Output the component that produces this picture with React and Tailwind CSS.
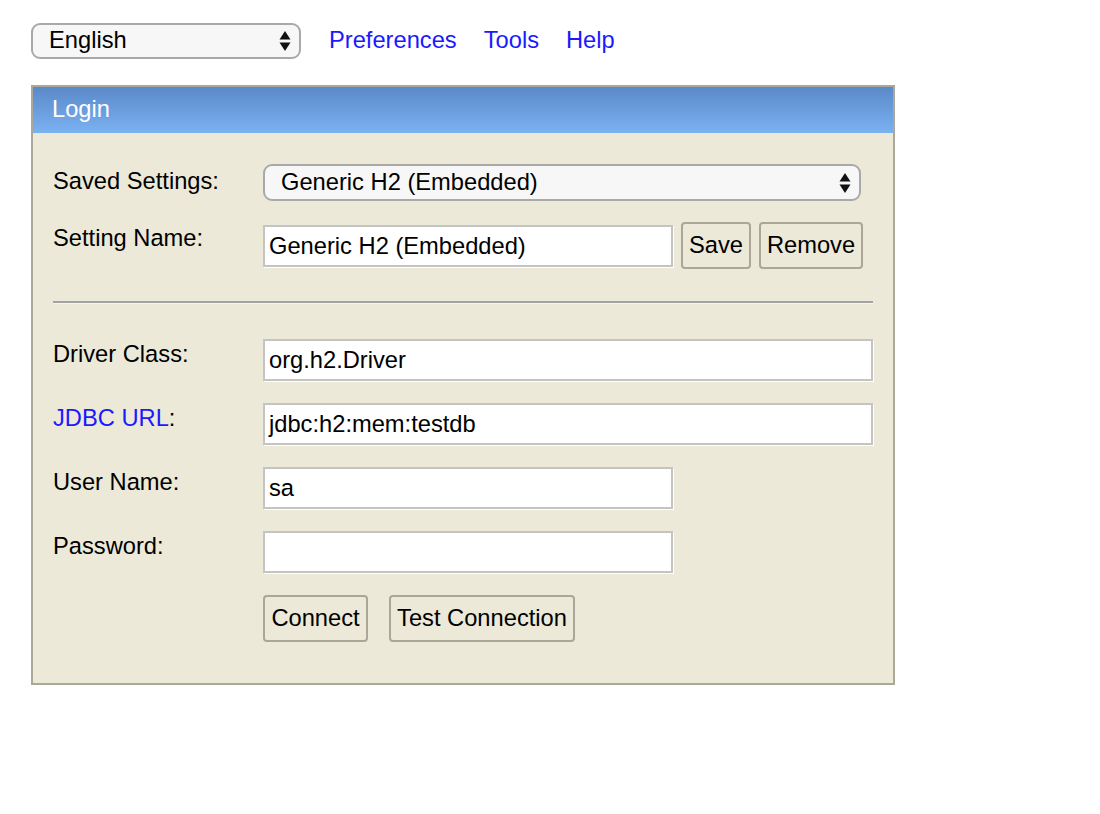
import React from "react";

function Arrows() {
    return (
        <svg width="12" height="22" viewBox="0 0 12 22" className="shrink-0">
            <path d="M6 1 L11.5 9.5 L0.5 9.5 Z" fill="#111" />
            <path d="M0.5 12.5 L11.5 12.5 L6 21 Z" fill="#111" />
        </svg>
    );
}

function FakeSelect({ value, className }) {
    return (
        <div
            className={`flex items-center justify-between rounded-[9px] border-2 border-[#a9a9a9] bg-[#f7f7f7] pl-[16px] pr-[8px] ${className}`}
        >
            <span className="leading-none">{value}</span>
            <Arrows />
        </div>
    );
}

function TextBox({ value, className }) {
    return (
        <div
            className={`h-[42px] flex items-center border-2 border-[#c4c4c4] bg-white pl-[4px] pt-[2px] shadow-[1px_1px_0_#ffffff] ${className}`}
        >
            <span className="leading-none">{value}</span>
        </div>
    );
}

function Btn({ children, className }) {
    return (
        <button
            className={`h-[47px] whitespace-nowrap rounded-[4px] border-2 border-[#aba797] bg-[#ece9d8] px-[4px] leading-none text-black ${className}`}
        >
            {children}
        </button>
    );
}

function Row({ label, children, pt = "pt-[1px]" }) {
    return (
        <div className="flex items-start">
            <div className={`w-[210px] shrink-0 leading-[28px] ${pt}`}>{label}</div>
            {children}
        </div>
    );
}

export default function App() {
    return (
        <div
            className="min-h-[814px] bg-white text-[23.7px] text-black pl-[31px] pt-[23px]"
            style={{ fontFamily: '"Liberation Sans", Arial, sans-serif' }}
        >
            {/* top bar */}
            <div className="flex items-center h-[36px]">
                <FakeSelect value="English" className="w-[270px] h-[36px]" />
                <div className="flex items-center gap-[27px] ml-[28px] text-[#1a1aff]">
                    <a href="#">Preferences</a>
                    <a href="#">Tools</a>
                    <a href="#">Help</a>
                </div>
            </div>

            {/* login panel */}
            <div className="mt-[26px] w-[864px] border-2 border-[#aca899] bg-[#ece9d8]">
                <div className="h-[46px] flex items-center pl-[19px] text-white bg-gradient-to-b from-[#5a89c9] to-[#7bb1f2]">
                    Login
                </div>

                <div className="pl-[20px] pr-[20px] pt-[31px] pb-[42px]">
                    <Row label="Saved Settings:" pt="pt-[3px]">
                        <FakeSelect value="Generic H2 (Embedded)" className="w-[598px] h-[37px]" />
                    </Row>

                    <div className="mt-[21px]">
                        <Row label="Setting Name:" pt="pt-[2px]">
                            <div className="flex items-start gap-[8px]">
                                <TextBox value="Generic H2 (Embedded)" className="w-[410px] mt-[3px]" />
                                <Btn className="w-[70px]">Save</Btn>
                                <Btn className="w-[104px]">Remove</Btn>
                            </div>
                        </Row>
                    </div>

                    <div className="mt-[32px] border-t-2 border-b border-t-[#a3a3a3] border-b-[#f4f4f4]"></div>

                    <div className="mt-[35px] flex flex-col gap-[22px]">
                        <Row label="Driver Class:">
                            <TextBox value="org.h2.Driver" className="w-[610px]" />
                        </Row>
                        <Row
                            label={
                                <>
                                    <a href="#" className="text-[#1a1aff]">JDBC URL</a>:
                                </>
                            }
                        >
                            <TextBox value="jdbc:h2:mem:testdb" className="w-[610px]" />
                        </Row>
                        <Row label="User Name:">
                            <TextBox value="sa" className="w-[410px]" />
                        </Row>
                        <Row label="Password:">
                            <TextBox value="" className="w-[410px]" />
                        </Row>
                        <Row label="">
                            <div className="flex gap-[21px] h-[46px]">
                                <Btn className="w-[105px] h-[46px]">Connect</Btn>
                                <Btn className="w-[186px] h-[46px]">Test Connection</Btn>
                            </div>
                        </Row>
                    </div>
                </div>
            </div>
        </div>
    );
}
